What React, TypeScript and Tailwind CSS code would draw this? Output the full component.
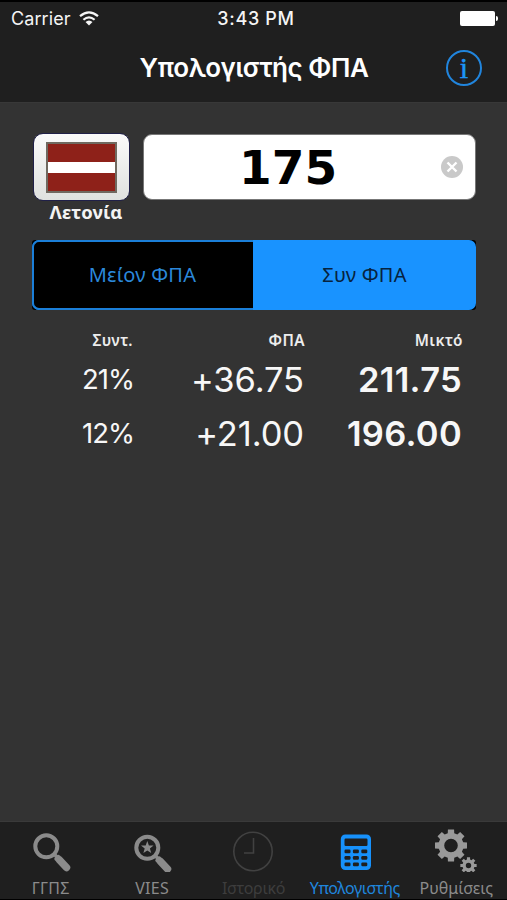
import type { ReactNode } from "react";

const INTER = "font-['Inter','Noto_Sans',sans-serif]";
const NOTO = "font-['Noto_Sans','Inter',sans-serif]";

function gearPath(cx: number, cy: number, outer: number, inner: number, hole: number) {
  const points: string[] = [];
  for (let i = 0; i < 8; i++) {
    const a = (i * Math.PI) / 4;
    const at = (r: number, t: number) =>
      `${(cx + r * Math.sin(a + t)).toFixed(2)} ${(cy - r * Math.cos(a + t)).toFixed(2)}`;
    points.push(at(inner, -0.26), at(outer, -0.19), at(outer, 0.19), at(inner, 0.26));
  }
  return `M${points.join("L")}Z M${cx - hole} ${cy}a${hole} ${hole} 0 1 0 ${hole * 2} 0a${hole} ${hole} 0 1 0 ${-hole * 2} 0Z`;
}

function Magnifier({ star = false }: { star?: boolean }) {
  return (
    <svg className="h-[50px] w-[60px]" viewBox={star ? "0 -1.5 60 50" : "0 0 60 50"} fill="none">
      <circle cx="25.3" cy="24.3" r="11" stroke="#8b8b8b" strokeWidth="4" />
      <path d="M33 32l5 5" stroke="#8b8b8b" strokeWidth="3.5" />
      <path d="M38.5 38L45.5 45.5" stroke="#8b8b8b" strokeWidth="7.5" strokeLinecap="round" />
      <path d="M35.3 36.8l2-2" stroke="#8b8b8b" strokeWidth="4" strokeLinecap="round" />
      {star && (
        <path
          d="M25.3 17.5l1.6 4.4 4.7.2-3.7 2.9 1.3 4.5-3.9-2.6-3.9 2.6 1.3-4.5-3.7-2.9 4.7-.2z"
          fill="#8b8b8b"
        />
      )}
    </svg>
  );
}

function Clock() {
  return (
    <svg className="h-[50px] w-[60px]" viewBox="0 0 60 50" fill="none" stroke="#414141" strokeWidth="1.6">
      <circle cx="30" cy="29.5" r="19.2" />
      <path d="M30.5 16v15H21" />
    </svg>
  );
}

function Calculator() {
  return (
    <svg className="h-[50px] w-[60px]" viewBox="0 0 60 50" fill="none">
      <rect x="15.8" y="12.5" width="30.2" height="35.5" rx="4.5" fill="#1791fb" />
      <rect x="19.5" y="16.5" width="23" height="7.5" rx="1.2" fill="#1f1f1f" />
      {[27.5, 34, 40.5].map((y) =>
        [19.5, 27.9, 36.3].map((x) => (
          <rect key={`${x}-${y}`} x={x} y={y} width="6" height="3.8" rx="1.2" fill="#1f1f1f" />
        )),
      )}
    </svg>
  );
}

function Gears() {
  return (
    <svg className="h-[50px] w-[60px]" viewBox="0 0 60 50" fill="#999" fillRule="evenodd">
      <path d={gearPath(25, 23.5, 16.3, 12.6, 6.8)} />
      <path d={gearPath(42.5, 43.5, 8.3, 6.1, 2.7)} />
    </svg>
  );
}

function Tab({ label, className, children }: { label: string; className: string; children: ReactNode }) {
  return (
    <div className="flex w-[101.4px] flex-col items-center">
      {children}
      <span className={`mt-[5px] whitespace-nowrap leading-[22px] ${className}`}>{label}</span>
    </div>
  );
}

function ResultRow({ rate, vat, gross }: { rate: string; vat: string; gross: string }) {
  return (
    <div className={`flex h-[54px] items-center text-right text-[#f7f7f7] ${INTER}`}>
      <span className="w-[134px] text-[27.5px] font-normal tracking-[-1px]">{rate}</span>
      <span className="w-[170px] text-[34.5px] font-normal tracking-[-0.1px]">{vat}</span>
      <span className="w-[158px] text-[34.5px] font-semibold tracking-[0.3px]">{gross}</span>
    </div>
  );
}

export default function App() {
  return (
    <div className={`flex h-[900px] w-[507px] flex-col overflow-hidden border-b border-t-2 border-black bg-[#333] ${INTER}`}>
      <header className="h-[101px] shrink-0 border-b border-[#383838] bg-[#1f1f1f]">
        <div className="flex h-8 items-center justify-between pl-[11px] pr-[9px] text-[#f5f5f5]">
          <div className="flex w-[200px] items-center gap-[8px]">
            <span className="text-[18px] font-normal tracking-[0.1px]">Carrier</span>
            <svg className="h-[15px] w-[20px]" viewBox="0 0 20 15" fill="none" stroke="#f5f5f5" strokeWidth="2.2">
              <path d="M1 5.2Q10-2.6 19 5.2M4.4 8.8Q10 3.8 15.6 8.8" />
              <path d="M6.5 11Q10 7.9 13.5 11L10 14.6z" fill="#f5f5f5" stroke="none" />
            </svg>
          </div>
          <span className="ml-[3px] text-[18px] font-medium tracking-[0.7px]">3:43 PM</span>
          <div className="flex w-[200px] items-center justify-end gap-px">
            <div className="h-[15px] w-[35px] rounded-[2px] bg-white" />
            <div className="h-[5px] w-[2px] rounded-r-full bg-white" />
          </div>
        </div>
        <div className="grid h-[67px] grid-cols-[1fr_auto_1fr] items-center">
          <span />
          <h1 className="pl-px text-[26px] font-semibold tracking-[-0.45px] text-white">Υπολογιστής ΦΠΑ</h1>
          <div className="flex justify-end pr-[25px]">
            <div className="flex size-[36px] items-center justify-center rounded-full border-2 border-[#2185dd] font-['Liberation_Serif',serif] text-[30px] leading-none text-[#1c94f8] [-webkit-text-stroke:0.5px_#1c94f8]">
              i
            </div>
          </div>
        </div>
      </header>

      <main className="grow">
        <div className="flex h-[137px] gap-[13px] pl-[33px] pt-[30px]">
          <div className="flex w-[97px] flex-col items-center">
            <div className="flex h-[68px] w-[97px] items-center justify-center rounded-[10px] border border-[#202048] bg-gradient-to-b from-[#fafafa] to-[#dfe1df]">
              <div className="flex h-[51px] w-[71px] flex-col border-2 border-[#6f6960] bg-[#8e2119]">
                <div className="mt-[18px] h-[11px] bg-white" />
              </div>
            </div>
            <span className={`-mt-px ml-[9px] text-[18.4px] font-bold leading-[24px] tracking-[0.2px] text-[#f3f3f3] ${NOTO}`}>Λετονία</span>
          </div>
          <div className="mt-px flex h-[66px] w-[333px] items-center justify-between rounded-[9px] border border-[#777] bg-white pl-[95px] pr-[12px]">
            <span className="font-['DejaVu_Sans',sans-serif] text-[47px] font-bold leading-none text-black">175</span>
            <svg className="size-[22px]" viewBox="0 0 22 22">
              <circle cx="11" cy="11" r="11" fill="#c9c9c9" />
              <path d="M6.5 6.5l9 9m0-9l-9 9" stroke="white" strokeWidth="2.4" />
            </svg>
          </div>
        </div>

        <div className={`ml-[32px] h-[70px] w-[444px] rounded-[3px] bg-black text-[20px] tracking-[0.25px] ${NOTO}`}>
          <div className="flex h-full overflow-hidden rounded-[7px] bg-[#1993ff]">
            <div className="flex w-[221px] items-center justify-center rounded-l-[7px] border-2 border-r-0 border-[#1b7fd8] bg-black pr-[2px] text-[#2b88da]">Μείον ΦΠΑ</div>
            <div className="flex grow items-center justify-center text-[#07233e]">Συν ΦΠΑ</div>
          </div>
        </div>

        <div className={`mt-[18px] mb-px flex h-[24px] items-center text-right text-[15.3px] font-semibold tracking-[0.45px] text-[#ededed] ${NOTO}`}>
          <span className="w-[133px]">Συντ.</span>
          <span className="w-[172px]">ΦΠΑ</span>
          <span className="w-[158px]">Μικτό</span>
        </div>
        <ResultRow rate="21%" vat="+36.75" gross="211.75" />
        <ResultRow rate="12%" vat="+21.00" gross="196.00" />
      </main>

      <nav className={`flex h-[78px] shrink-0 border-t border-[#3a3a3a] bg-[#1f1f1f] text-[16px] ${NOTO}`}>
        <Tab label="ΓΓΠΣ" className="tracking-[0.3px] text-[#8b8b8b]"><Magnifier /></Tab>
        <Tab label="VIES" className="tracking-[0.3px] text-[#8b8b8b]"><Magnifier star /></Tab>
        <Tab label="Ιστορικό" className="tracking-[-0.3px] text-[#3d3d3d]"><Clock /></Tab>
        <Tab label="Υπολογιστής" className="tracking-[-0.4px] text-[#1f86dd]"><Calculator /></Tab>
        <Tab label="Ρυθμίσεις" className="text-[#8b8b8b]"><Gears /></Tab>
      </nav>
    </div>
  );
}
